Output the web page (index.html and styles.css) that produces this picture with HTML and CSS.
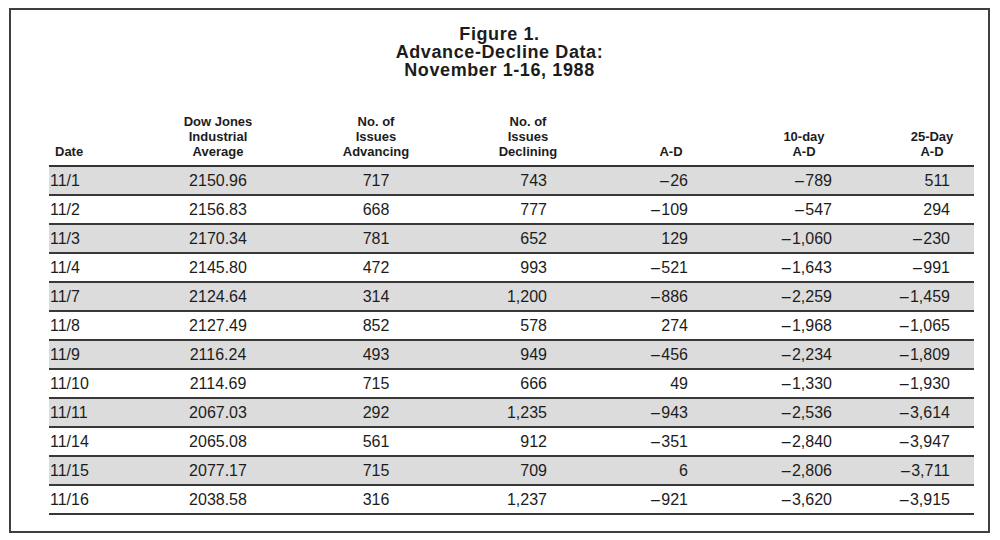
FILE: index.html
```html
<html>
<head>
<meta http-equiv="Content-Type" content="text/html; charset=UTF-8">
<title>Figure 1. Advance-Decline Data</title>
<link rel="stylesheet" href="styles.css">
</head>

<body>
	<div class='figure'>
		<div class='caption'>
			<div>Figure 1.</div>
			<div>Advance-Decline Data:</div>
			<div>November 1-16, 1988</div>
		</div>
		<div class='tablewrap'>
			<table class='addata'>
				<colgroup>
					<col class='w-date'>
					<col class='w-dow'>
					<col class='w-adv'>
					<col class='w-dec'>
					<col class='w-ad'>
					<col class='w-ten'>
					<col class='w-tf'>
				</colgroup>
				<tr>
					<th class='date'>Date</th>
					<th class='dow'>Dow Jones<br>Industrial<br>Average</th>
					<th class='adv'>No. of<br>Issues<br>Advancing</th>
					<th class='dec'>No. of<br>Issues<br>Declining</th>
					<th class='ad'>A-D</th>
					<th class='ten'>10-day<br>A-D</th>
					<th class='tf'>25-Day<br>A-D</th>
				</tr>
				<tr class='shade'>
					<td class='date'>11/1</td><td class='dow'>2150.96</td><td class='adv'>717</td><td class='dec'>743</td>
					<td class='ad'>&ndash;&#8202;26</td><td class='ten'>&ndash;&#8202;789</td><td class='tf'>511</td>
				</tr>
				<tr>
					<td class='date'>11/2</td><td class='dow'>2156.83</td><td class='adv'>668</td><td class='dec'>777</td>
					<td class='ad'>&ndash;&#8202;109</td><td class='ten'>&ndash;&#8202;547</td><td class='tf'>294</td>
				</tr>
				<tr class='shade'>
					<td class='date'>11/3</td><td class='dow'>2170.34</td><td class='adv'>781</td><td class='dec'>652</td>
					<td class='ad'>129</td><td class='ten'>&ndash;&#8202;1,060</td><td class='tf'>&ndash;&#8202;230</td>
				</tr>
				<tr>
					<td class='date'>11/4</td><td class='dow'>2145.80</td><td class='adv'>472</td><td class='dec'>993</td>
					<td class='ad'>&ndash;&#8202;521</td><td class='ten'>&ndash;&#8202;1,643</td><td class='tf'>&ndash;&#8202;991</td>
				</tr>
				<tr class='shade'>
					<td class='date'>11/7</td><td class='dow'>2124.64</td><td class='adv'>314</td><td class='dec'>1,200</td>
					<td class='ad'>&ndash;&#8202;886</td><td class='ten'>&ndash;&#8202;2,259</td><td class='tf'>&ndash;&#8202;1,459</td>
				</tr>
				<tr>
					<td class='date'>11/8</td><td class='dow'>2127.49</td><td class='adv'>852</td><td class='dec'>578</td>
					<td class='ad'>274</td><td class='ten'>&ndash;&#8202;1,968</td><td class='tf'>&ndash;&#8202;1,065</td>
				</tr>
				<tr class='shade'>
					<td class='date'>11/9</td><td class='dow'>2116.24</td><td class='adv'>493</td><td class='dec'>949</td>
					<td class='ad'>&ndash;&#8202;456</td><td class='ten'>&ndash;&#8202;2,234</td><td class='tf'>&ndash;&#8202;1,809</td>
				</tr>
				<tr>
					<td class='date'>11/10</td><td class='dow'>2114.69</td><td class='adv'>715</td><td class='dec'>666</td>
					<td class='ad'>49</td><td class='ten'>&ndash;&#8202;1,330</td><td class='tf'>&ndash;&#8202;1,930</td>
				</tr>
				<tr class='shade'>
					<td class='date'>11/11</td><td class='dow'>2067.03</td><td class='adv'>292</td><td class='dec'>1,235</td>
					<td class='ad'>&ndash;&#8202;943</td><td class='ten'>&ndash;&#8202;2,536</td><td class='tf'>&ndash;&#8202;3,614</td>
				</tr>
				<tr>
					<td class='date'>11/14</td><td class='dow'>2065.08</td><td class='adv'>561</td><td class='dec'>912</td>
					<td class='ad'>&ndash;&#8202;351</td><td class='ten'>&ndash;&#8202;2,840</td><td class='tf'>&ndash;&#8202;3,947</td>
				</tr>
				<tr class='shade'>
					<td class='date'>11/15</td><td class='dow'>2077.17</td><td class='adv'>715</td><td class='dec'>709</td>
					<td class='ad'>6</td><td class='ten'>&ndash;&#8202;2,806</td><td class='tf'>&ndash;&#8202;3,711</td>
				</tr>
				<tr>
					<td class='date'>11/16</td><td class='dow'>2038.58</td><td class='adv'>316</td><td class='dec'>1,237</td>
					<td class='ad'>&ndash;&#8202;921</td><td class='ten'>&ndash;&#8202;3,620</td><td class='tf'>&ndash;&#8202;3,915</td>
				</tr>
			</table>
		</div>
	</div>
</body>
</html>
```

FILE: styles.css
```css
body {
	margin:0;
	padding:0;
	background-color:#FFFFFF;
	font-family: "Liberation Sans", Arial, sans-serif;
	color:#1c1c1c;
}

div.figure {
	box-sizing: border-box;
	margin: 8px 0 0 9px;
	width: 981px;
	height: 525px;
	padding-top: 15px;
	border: 2px solid #3f3f3f;
}

div.caption {
	text-align: center;
	font-size: 18px;
	font-weight: bold;
	letter-spacing: 0.6px;
	line-height: 18px;
	margin-bottom: 35px;
}

div.tablewrap {
	padding: 0 14px 0 38px;
}

table.addata {
	width: 925px;
	table-layout: fixed;
	border-collapse: collapse;
	border-spacing: 0;
}

col.w-date { width: 101px; }
col.w-dow  { width: 136px; }
col.w-adv  { width: 180px; }
col.w-dec  { width: 124px; }
col.w-ad   { width: 162px; }
col.w-ten  { width: 128px; }
col.w-tf   { width: 94px; }

th {
	padding: 0 0 6px 0;
	font-size: 13px;
	font-weight: bold;
	line-height: 15px;
	text-align: center;
	vertical-align: bottom;
	border-bottom: 2px solid #333333;
}

td {
	padding: 0;
	height: 27px;
	font-size: 16px;
	line-height: 27px;
	border-bottom: 2px solid #383838;
	white-space: nowrap;
}

tr.shade td {
	background-color: #dcdcdc;
}

th.date { text-align: left; padding-left: 6px; }
td.date { text-align: left; padding-left: 1px; }

td.dow, td.adv { text-align: center; }

td.dec { text-align: right; padding-right: 43px; }
td.ad  { text-align: right; padding-right: 64px; }

th.ten { padding-right: 24px; }
td.ten { text-align: right; padding-right: 48px; }

th.tf  { padding-left: 10px; }
td.tf  { text-align: right; padding-right: 24px; }
```
